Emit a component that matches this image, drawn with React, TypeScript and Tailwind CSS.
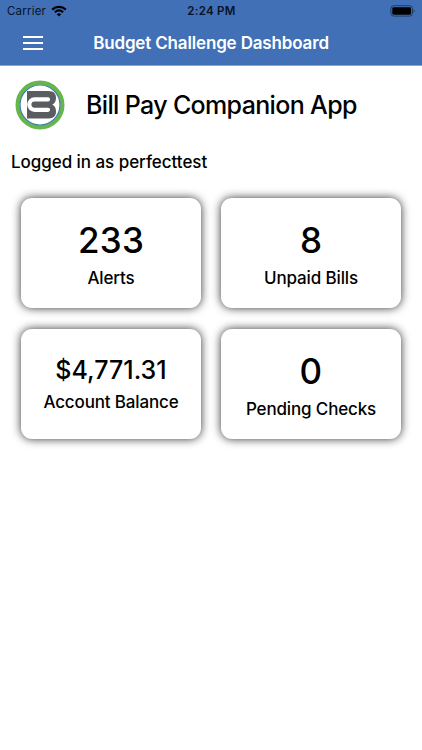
import React from "react";

interface StatCardProps {
  value: string;
  label: string;
  compact?: boolean;
}

const StatCard: React.FC<StatCardProps> = ({ value, label, compact }) => {
  return (
    <div
      className={`flex h-[110px] w-[180px] flex-col items-center rounded-[11px] bg-white font-[550] shadow-[0_0_10px_rgba(0,0,0,0.8)] ${
        compact ? "pt-[25px]" : "pt-5"
      }`}
    >
      <div
        className={
          compact
            ? "text-[25px] leading-[32px]"
            : "text-[35px] leading-[44px] tracking-[0.2px]"
        }
      >
        {value}
      </div>
      <div className="text-[17px] leading-[32px] tracking-[-0.15px]">{label}</div>
    </div>
  );
};

const Logo = () => (
  <svg width="50" height="50" viewBox="0 0 50 50" className="shrink-0">
    <circle cx="25" cy="25" r="22.4" fill="#fff" stroke="#68b54c" strokeWidth="4.2" />
    <circle cx="25" cy="25" r="20" fill="none" stroke="#3478b5" strokeWidth="1.2" />
    <path
      d="M12 11h21.500c5.500 0 7.500 2.800 7.500 6.800 0 3.400-1.100 5.700-3.700 6.900 2.600 1.200 3.700 3.500 3.700 6.900 0 4-2 6.900-7.500 6.900H12z"
      fill="#5b5c60"
    />
    <path
      d="M33 19.400H19.500a5.200 5.200 0 0 0 0 10.400H33"
      fill="none"
      stroke="#fff"
      strokeWidth="4.2"
      strokeLinecap="round"
    />
  </svg>
);

const StatusBar = () => (
  <div className="flex h-[22px] items-center text-[11.5px] text-[#071326]">
    <div className="flex flex-1 items-center gap-[5px] pl-[7px]">
      <span className="pt-[2px] tracking-[0.2px]">Carrier</span>
      <svg width="16" height="12" viewBox="0 0 16 12" className="mb-px">
        <path d="M1.200 4.600c3.900-3.700 9.700-3.700 13.600 0" fill="none" stroke="#000" strokeWidth="2.3" />
        <path d="M3.900 7.200c2.500-2.200 5.700-2.200 8.200 0" fill="none" stroke="#000" strokeWidth="2.1" />
        <path d="M8 11.600 5.700 9.200c1.300-1.200 3.300-1.200 4.600 0z" fill="#000" />
      </svg>
    </div>
    <span className="pt-[2px] font-semibold tracking-[0.3px]">2:24 PM</span>
    <div className="flex flex-1 justify-end pr-[6px]">
      <svg width="26" height="12" viewBox="0 0 26 12" className="mb-px">
        <rect x=".9" y=".7" width="21.6" height="10.4" rx="2.800" fill="none" stroke="#203b65" />
        <rect x="2.3" y="2.2" width="18.8" height="7.5" rx="1.4" fill="#000" />
        <path d="M23.700 4.200c1.300.5 1.300 3 0 3.500z" fill="#203b65" />
      </svg>
    </div>
  </div>
);

const App: React.FC = () => {
  return (
    <div className="min-h-[750px] w-[422px] overflow-hidden bg-white font-['Inter',sans-serif] text-black">
      <header className="h-[66px] border-b border-[#85a2d2] bg-[#4170b7]">
        <StatusBar />
        <div className="grid h-[43px] grid-cols-[60px_1fr_60px] items-center">
          <button aria-label="Menu" className="flex flex-col gap-[4px] pb-px pl-[23px]">
            <span className="h-[2px] w-[20px] bg-white"></span>
            <span className="h-[2px] w-[20px] bg-white"></span>
            <span className="h-[2px] w-[20px] bg-white"></span>
          </button>
          <h1 className="whitespace-nowrap text-center text-[17px] font-semibold tracking-[-0.16px] text-white">
            Budget Challenge Dashboard
          </h1>
        </div>
      </header>
      <main>
        <div className="flex h-[78px] items-center gap-[21px] pl-[15px]">
          <Logo />
          <h2 className="whitespace-nowrap pt-px text-[25px] font-[550] tracking-[-0.65px]">
            Bill Pay Companion App
          </h2>
        </div>
        <p className="h-[54px] pl-[11px] pt-[6px] text-[17px] font-[550] tracking-[-0.05px]">
          Logged in as perfecttest
        </p>
        <div className="grid grid-cols-[180px_180px] gap-x-5 gap-y-[21px] pl-[21px]">
          <StatCard value="233" label="Alerts" />
          <StatCard value="8" label="Unpaid Bills" />
          <StatCard value="$4,771.31" label="Account Balance" compact />
          <StatCard value="0" label="Pending Checks" />
        </div>
      </main>
    </div>
  );
};

export default App;
